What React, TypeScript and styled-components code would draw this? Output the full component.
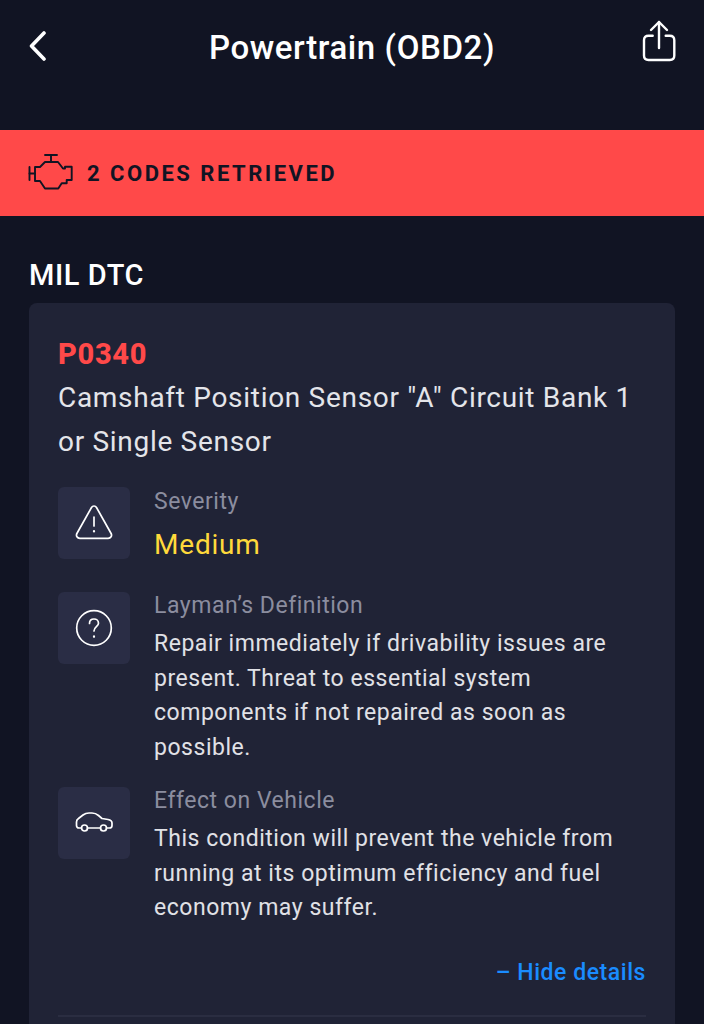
import React from "react";
import styled, { createGlobalStyle } from "styled-components";

const GlobalStyle = createGlobalStyle`
  html, body {
    margin: 0;
    padding: 0;
    background: #111423;
    font-family: Roboto, "Liberation Sans", sans-serif;
  }
`;

const details = [
  {
    key: "severity",
    label: "Severity",
    value: "Medium",
    highlight: true,
    icon: (
      <svg width="38" height="38" viewBox="0 0 38 38" fill="none" stroke="#fff" strokeWidth="1.700" strokeLinecap="round" strokeLinejoin="round">
        <path d="M16.500 3.500 1.900 29.500c-1.200 2.300.3 4.800 3 4.800h28.200c2.700 0 4.200-2.500 3-4.800L21.500 3.500c-1.100-2-3.900-2-5 0Z" />
        <path d="M19 13v9" />
        <path d="M19 27v.4" strokeWidth="2.200" />
      </svg>
    ),
  },
  {
    key: "definition",
    label: "Layman’s Definition",
    value:
      "Repair immediately if drivability issues are present. Threat to essential system components if not repaired as soon as possible.",
    icon: (
      <svg width="38" height="38" viewBox="0 0 38 38" fill="none" stroke="#fff" strokeWidth="1.700" strokeLinecap="round" strokeLinejoin="round">
        <circle cx="19" cy="19" r="17.300" />
        <path d="M14.500 14.500c0-2.800 2-4.500 4.500-4.500s4.500 1.800 4.500 4.200c0 3.400-4.500 3.700-4.500 7.800" />
        <path d="M19 27.400v.4" strokeWidth="2.200" />
      </svg>
    ),
  },
  {
    key: "effect",
    label: "Effect on Vehicle",
    value:
      "This condition will prevent the vehicle from running at its optimum efficiency and fuel economy may suffer.",
    icon: (
      <svg width="38" height="38" viewBox="0 0 38 38" fill="none" stroke="#fff" strokeWidth="1.700" strokeLinecap="round" strokeLinejoin="round">
        <path d="M6.500 24H4c-1.500 0-2.500-1-2.500-2.500V18c0-1.500.7-2.700 2-3.500L8 11c1.600-1.200 3.500-2 6-2h3c2.500 0 4.500.8 6.500 2.500l3.500 3 6 1c2.500.5 4 1.800 4 3.500v2.500c0 1.500-1 2.500-2.500 2.500h-3" />
        <path d="M12.500 24h13" />
        <circle cx="9.500" cy="24" r="3" />
        <circle cx="28.500" cy="24" r="3" />
      </svg>
    ),
  },
];

export default function App() {
  return (
    <Screen>
      <GlobalStyle />
      <Header>
        <IconButton aria-label="Back">
          <svg width="20" height="32" viewBox="0 0 20 32" fill="none" stroke="#fff" strokeWidth="3.600" strokeLinecap="round" strokeLinejoin="round">
            <path d="M16 2 3.500 15 16 28" />
          </svg>
        </IconButton>
        <Title>Powertrain (OBD2)</Title>
        <IconButton aria-label="Share">
          <svg width="34" height="54" viewBox="0 0 34 54" fill="none" stroke="#fff" strokeWidth="2.400" strokeLinecap="round" strokeLinejoin="round">
            <path d="M17 2v26" />
            <path d="M9 10l8-8 8 8" />
            <path d="M10.700 15.700H6.500c-3 0-4.500 1.500-4.500 4.500v15.300c0 3 1.500 4.500 4.500 4.500h21.300c3 0 4.500-1.500 4.500-4.500V20.200c0-3-1.500-4.500-4.500-4.500h-4.100" />
          </svg>
        </IconButton>
      </Header>
      <Banner>
        <svg width="46" height="38" viewBox="0 0 46 38" fill="none" stroke="#111423" strokeWidth="1.900" strokeLinecap="round" strokeLinejoin="round">
          <path d="M17 1h12" />
          <path d="M23 1v7" />
          <path d="M1.500 13v13" />
          <path d="M1.500 19.500H7" />
          <path d="M7 13h5l5-5h13l5 6.500h2v-1.800h6.700V26h-5v3.300h-5l-3.400 5.200H17L12 27H7Z" />
        </svg>
        <BannerText>2 CODES RETRIEVED</BannerText>
      </Banner>
      <SectionTitle>MIL DTC</SectionTitle>
      <Card>
        <Code>P0340</Code>
        <CodeTitle>Camshaft Position Sensor "A" Circuit Bank 1 or Single Sensor</CodeTitle>
        <DetailList>
          {details.map((item) => (
            <DetailRow key={item.key}>
              <IconTile>{item.icon}</IconTile>
              <DetailBody $highlight={item.highlight}>
                <DetailLabel>{item.label}</DetailLabel>
                {item.highlight ? (
                  <Severity>{item.value}</Severity>
                ) : (
                  <DetailText>{item.value}</DetailText>
                )}
              </DetailBody>
            </DetailRow>
          ))}
        </DetailList>
        <ToggleRow>
          <Toggle>– Hide details</Toggle>
        </ToggleRow>
        <Divider />
      </Card>
    </Screen>
  );
}

const Screen = styled.div`
  width: 704px;
  height: 1024px;
  overflow: hidden;
  background: #111423;
`;

const Header = styled.header`
  display: flex;
  align-items: center;
  justify-content: space-between;
  height: 94px;
  padding: 0 28px;
  margin-bottom: 36px;
`;

const IconButton = styled.div`
  display: flex;
  align-items: center;
  width: 34px;
`;

const Title = styled.h1`
  margin: 0;
  color: #fff;
  font-size: 33px;
  font-weight: 500;
  letter-spacing: 0.6px;
`;

const Banner = styled.div`
  display: flex;
  align-items: center;
  gap: 13px;
  height: 86px;
  padding: 0 28px;
  background: #ff4949;
`;

const BannerText = styled.span`
  color: #111423;
  font-size: 22px;
  font-weight: 700;
  letter-spacing: 2.500px;
`;

const SectionTitle = styled.h2`
  margin: 44px 0 12px 29px;
  color: #fff;
  font-size: 29px;
  line-height: 31px;
  font-weight: 500;
  letter-spacing: 0.6px;
`;

const Card = styled.section`
  margin: 0 29px;
  padding: 35px 29px 0;
  height: 800px;
  border-radius: 8px;
  background: #202336;
`;

const Code = styled.div`
  color: #ff4949;
  font-size: 29px;
  line-height: 32px;
  font-weight: 800;
  letter-spacing: 0.7px;
`;

const CodeTitle = styled.p`
  margin: 6px 0 0;
  color: #e4e5ea;
  font-size: 28px;
  line-height: 44px;
  letter-spacing: 0.7px;
`;

const DetailList = styled.div`
  display: flex;
  flex-direction: column;
  gap: 22px;
  margin-top: 23px;
`;

const DetailRow = styled.div`
  display: grid;
  grid-template-columns: 72px 1fr;
  column-gap: 24px;
`;

const IconTile = styled.div`
  display: flex;
  align-items: center;
  justify-content: center;
  width: 72px;
  height: 72px;
  border-radius: 6px;
  background: #2a2d45;
`;

const DetailBody = styled.div<{ $highlight?: boolean }>`
  padding: ${(props) => (props.$highlight ? "1px 0 8px" : "0")};
`;

const DetailLabel = styled.div`
  color: #8b8d9f;
  font-size: 23px;
  line-height: 27px;
  letter-spacing: 0.53px;
`;

const Severity = styled.div`
  margin-top: 13px;
  color: #ffd93b;
  font-size: 28px;
  line-height: 34px;
  letter-spacing: 0.8px;
`;

const DetailText = styled.p`
  margin: 8px 0 0;
  color: #e0e1e6;
  font-size: 23px;
  line-height: 34.500px;
  letter-spacing: 0.53px;
`;

const ToggleRow = styled.div`
  display: flex;
  justify-content: flex-end;
  margin-top: 33.500px;
`;

const Toggle = styled.span`
  color: #1a8cff;
  font-size: 23px;
  line-height: 28px;
  font-weight: 500;
  letter-spacing: 0.55px;
`;

const Divider = styled.div`
  height: 2px;
  margin-top: 28px;
  background: #2a2d41;
`;
